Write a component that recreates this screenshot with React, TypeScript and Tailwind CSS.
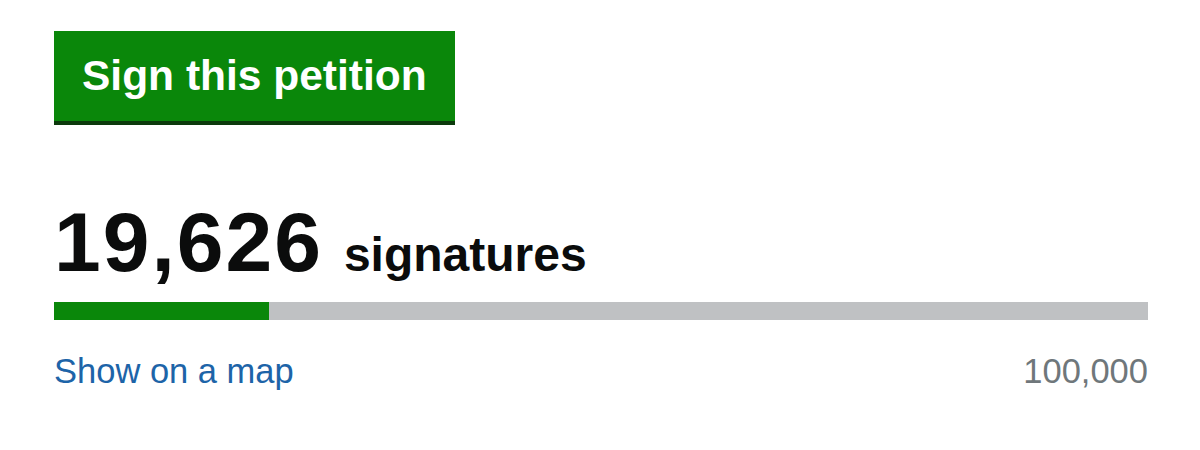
import React from "react";

const signatures = 19626;
const target = 100000;

export default function App() {
  const pct = (signatures / target) * 100;
  return (
    <div
      className="w-[1200px] h-[450px] bg-white pl-[54px] pt-[31px]"
      style={{ fontFamily: '"Liberation Sans", Arial, sans-serif' }}
    >
      <div className="flex flex-col w-[1094px]">
        <div className="flex">
          <button className="h-[90px] px-[28px] flex items-center bg-[#0a870a] text-white font-bold text-[42.5px] leading-none shadow-[0_4px_0_#0c3a0c]">
            Sign this petition
          </button>
        </div>

        <div className="mt-[79px] flex items-baseline gap-[21px] text-[#0b0c0c] font-bold leading-none">
          <span className="text-[84px] tracking-[2px]">19,626</span>
          <span className="text-[48px]">signatures</span>
        </div>

        <div className="mt-[18px] h-[18px] w-full bg-[#bfc1c3]">
          <div className="h-full bg-[#0a870a]" style={{ width: `${pct}%` }} />
        </div>

        <div className="mt-[34px] flex justify-between items-baseline text-[34.5px] leading-none">
          <a href="#" className="text-[#1d64a8]">
            Show on a map
          </a>
          <span className="text-[#6f777b]">100,000</span>
        </div>
      </div>
    </div>
  );
}
